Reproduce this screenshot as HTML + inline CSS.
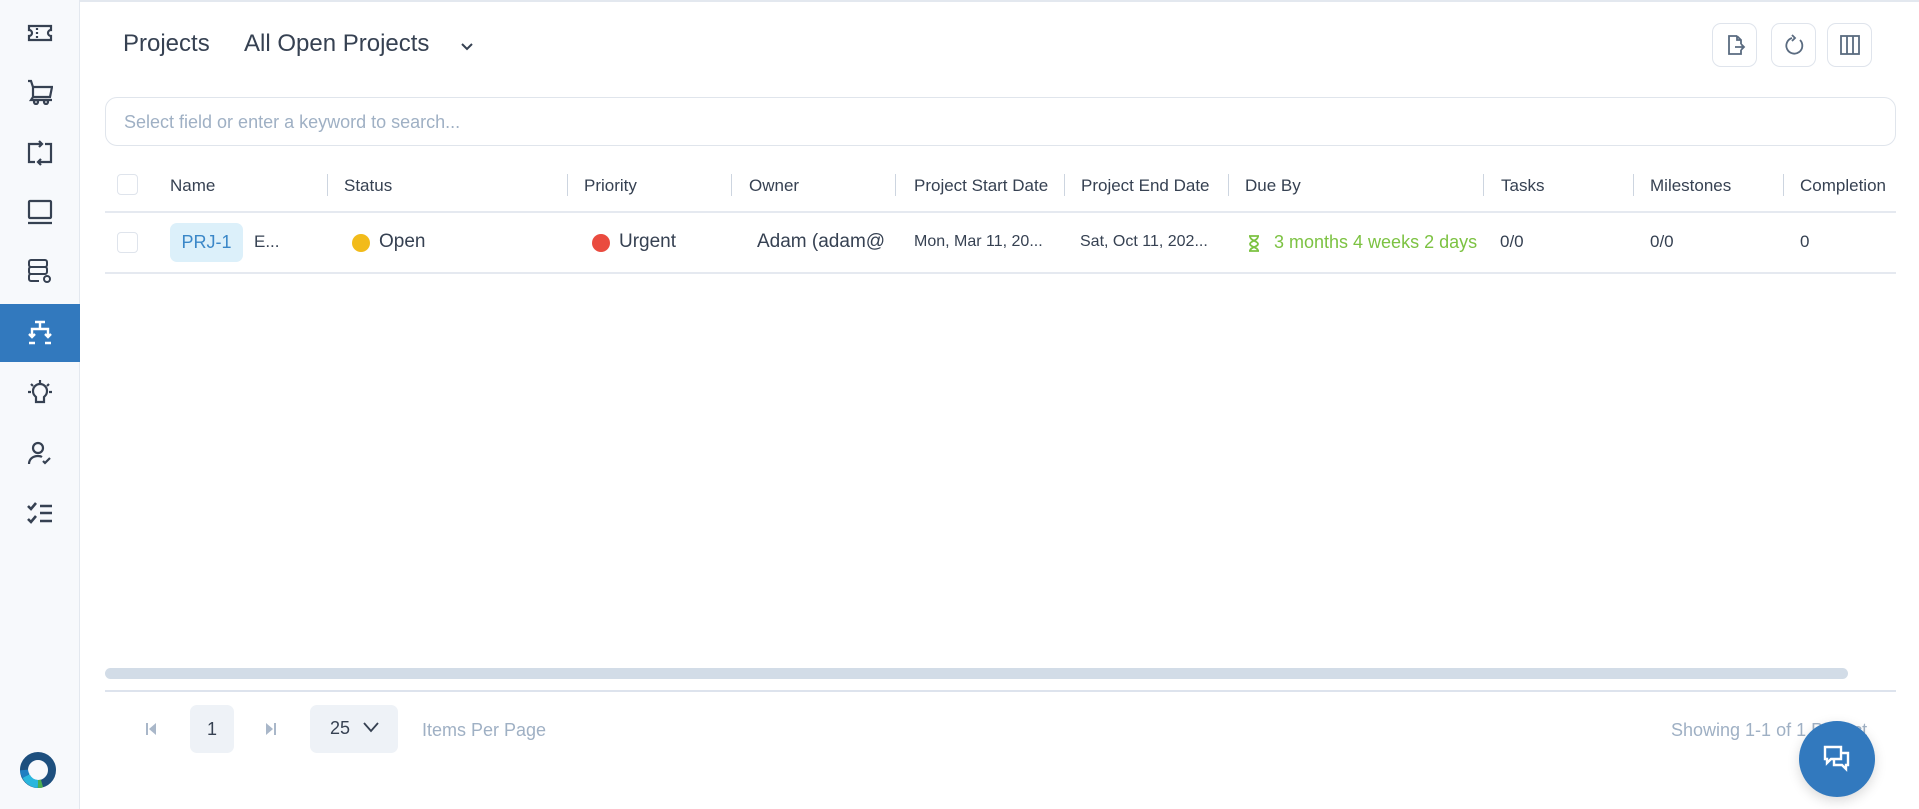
<!DOCTYPE html>
<html><head><meta charset="utf-8"><style>
*{box-sizing:border-box;margin:0;padding:0}
body{width:1919px;height:809px;overflow:hidden;background:#fff;font-family:"Liberation Sans",sans-serif;color:#364152;position:relative}
.side{position:absolute;left:0;top:0;width:80px;height:809px;background:#f7f9fc;border-right:1px solid #e3e8ef}
.topline{position:absolute;left:0;top:0;width:1919px;height:2px;background:#e3e8ef}
.ic{position:absolute;left:27px;width:26px;height:26px}
.act{position:absolute;left:0;top:304px;width:80px;height:58px;background:#3279be}
.abs{position:absolute;white-space:nowrap}
.tb{position:absolute;top:23px;width:45px;height:44px;border:1px solid #dfe4ec;border-radius:9px;display:flex;align-items:center;justify-content:center}
.hd{position:absolute;top:176px;font-size:17px;color:#364152}
.dv{position:absolute;top:174px;width:1px;height:22px;background:#cdd5e0}
.cd{position:absolute;top:232px;font-size:17px;color:#364152;white-space:nowrap;overflow:hidden}
.cb{position:absolute;left:117px;width:21px;height:21px;border:1px solid #dfe4ec;border-radius:4px;background:#fff}
</style></head><body>
<div class="topline"></div>
<div class="side"></div>
<div class="act"></div>
<svg class="ic" style="top:20px" viewBox="0 0 26 26" fill="none" stroke="#364152" stroke-width="2.2"><path d="M2 6h22v4a3 3 0 0 0 0 6v4H2v-4a3 3 0 0 0 0-6z"/><path d="M10 8v2M10 12v2M10 16v2"/></svg>
<svg class="ic" style="top:79px" viewBox="0 0 26 26" fill="none" stroke="#364152" stroke-width="2.2"><path d="M1 2h3l2 6v10h17l2-10H6M6 18l-2 3h21"/><circle cx="9" cy="23" r="2"/><circle cx="19" cy="23" r="2"/></svg>
<svg class="ic" style="top:140px" viewBox="0 0 26 26" fill="none" stroke="#364152" stroke-width="2.2"><path d="M9 4H2v18h6M17 22h7V4h-6M12 1l3 3-3 3M14 19l-3 3 3 3"/><path d="M15 4H9M11 22h6"/></svg>
<svg class="ic" style="top:199px" viewBox="0 0 26 26" fill="none" stroke="#364152" stroke-width="2.2"><rect x="2" y="2" width="22" height="17" rx="1"/><path d="M1 24h24"/></svg>
<svg class="ic" style="top:259px" viewBox="0 0 26 26" fill="none" stroke="#364152" stroke-width="2"><rect x="2" y="1" width="18" height="7" rx="2"/><rect x="2" y="8" width="18" height="7" rx="2"/><path d="M12 22H4a2 2 0 0 1-2-2v-3a2 2 0 0 1 2-2h10"/><circle cx="20" cy="20" r="3"/></svg>
<svg class="ic" style="top:320px" viewBox="0 0 26 26" fill="none" stroke="#fff" stroke-width="2.4"><path d="M8 2h10M13 2v7M5 17V9h16v8M2 14l3 3 3-3M18 14l3 3 3-3M2 23h6M18 23h6"/></svg>
<svg class="ic" style="top:379px" viewBox="0 0 26 26" fill="none" stroke="#364152" stroke-width="2.2"><path d="M13 1v3M4 5l2 2M22 5l-2 2M1 13h3M22 13h3"/><path d="M9 18c-2-2-3-3-3-6a7 7 0 0 1 14 0c0 3-1 4-3 6v5H9z"/></svg>
<svg class="ic" style="top:440px" viewBox="0 0 26 26" fill="none" stroke="#364152" stroke-width="2.2"><circle cx="11" cy="8" r="5"/><path d="M2 24c0-5 4-8 9-8 2 0 3 .3 4 1M16 21l2 2 5-5"/></svg>
<svg class="ic" style="top:500px" viewBox="0 0 26 26" fill="none" stroke="#364152" stroke-width="2.6"><path d="M1 6l3 3 5-6M1 19l3 3 5-6M13 6h12M13 13h12M13 21h12"/></svg>
<svg style="position:absolute;left:19px;top:751px" width="38" height="38" viewBox="0 0 38 38"><circle cx="19" cy="19" r="14" fill="none" stroke="#1d4f7e" stroke-width="8"/><path d="M7 25a14 14 0 0 0 12 8" fill="none" stroke="#2ab6dd" stroke-width="8"/><path d="M19 33a14 14 0 0 0 4-.5" fill="none" stroke="#4caf50" stroke-width="8"/><path d="M5 19a14 14 0 0 0 2 6" fill="none" stroke="#1f7fc2" stroke-width="8"/></svg>

<div class="abs" style="left:123px;top:30px;font-size:24px;color:#364152">Projects</div>
<div class="abs" style="left:244px;top:30px;font-size:24px;color:#364152">All Open Projects</div>
<svg style="position:absolute;left:459px;top:41px" width="16" height="12" viewBox="0 0 16 12" fill="none" stroke="#364152" stroke-width="2"><path d="M3 3l5 5 5-5"/></svg>

<div class="tb" style="left:1712px"><svg width="22" height="22" viewBox="0 0 22 22" fill="none" stroke="#5a6b80" stroke-width="1.8"><path d="M13 2H5v18h12v-4M13 2l4 4v4M13 2v4h4M11 13h9M17 10l3 3-3 3"/></svg></div>
<div class="tb" style="left:1771px"><svg width="22" height="22" viewBox="0 0 22 22" fill="none" stroke="#5a6b80" stroke-width="1.8"><path d="M17 6a8 8 0 1 1-8-2M9 1l3 3-3 3"/></svg></div>
<div class="tb" style="left:1827px"><svg width="22" height="22" viewBox="0 0 22 22" fill="none" stroke="#5a6b80" stroke-width="1.8"><rect x="2" y="2" width="18" height="18"/><path d="M8 2v18M14 2v18"/></svg></div>

<div style="position:absolute;left:105px;top:97px;width:1791px;height:49px;border:1px solid #e0e5ec;border-radius:12px"></div>
<div class="abs" style="left:124px;top:112px;font-size:18px;color:#9fb0c4">Select field or enter a keyword to search...</div>

<div class="cb" style="top:174px"></div>
<div class="hd" style="left:170px">Name</div>
<div class="dv" style="left:327px"></div><div class="hd" style="left:344px">Status</div>
<div class="dv" style="left:567px"></div><div class="hd" style="left:584px">Priority</div>
<div class="dv" style="left:731px"></div><div class="hd" style="left:749px">Owner</div>
<div class="dv" style="left:895px"></div><div class="hd" style="left:914px;width:150px;overflow:hidden;white-space:nowrap">Project Start Date</div>
<div class="dv" style="left:1064px"></div><div class="hd" style="left:1081px;width:147px;overflow:hidden;white-space:nowrap">Project End Date</div>
<div class="dv" style="left:1228px"></div><div class="hd" style="left:1245px">Due By</div>
<div class="dv" style="left:1483px"></div><div class="hd" style="left:1501px">Tasks</div>
<div class="dv" style="left:1633px"></div><div class="hd" style="left:1650px">Milestones</div>
<div class="dv" style="left:1783px"></div><div class="hd" style="left:1800px;width:96px;overflow:hidden;white-space:nowrap">Completion</div>
<div style="position:absolute;left:105px;top:211px;width:1791px;height:2px;background:#e5e9f0"></div>

<div class="cb" style="top:232px"></div>
<div style="position:absolute;left:170px;top:223px;width:73px;height:39px;background:#dcf0fa;border-radius:7px;color:#3a87c8;font-size:18px;text-align:center;line-height:39px">PRJ-1</div>
<div class="cd" style="left:254px">E...</div>
<div style="position:absolute;left:352px;top:234px;width:18px;height:18px;border-radius:50%;background:#f2bb1a"></div>
<div class="cd" style="left:379px;font-size:19px;top:231px">Open</div>
<div style="position:absolute;left:592px;top:234px;width:18px;height:18px;border-radius:50%;background:#ea4b3f"></div>
<div class="cd" style="left:619px;font-size:19px;top:231px">Urgent</div>
<div class="cd" style="left:757px;width:145px;font-size:19px;top:231px">Adam (adam@</div>
<div class="cd" style="left:914px;font-size:16px;top:233px">Mon, Mar 11, 20...</div>
<div class="cd" style="left:1080px;font-size:16px;top:233px">Sat, Oct 11, 202...</div>
<svg style="position:absolute;left:1248px;top:235px" width="12" height="17" viewBox="0 0 12 17" fill="none" stroke="#7cc242" stroke-width="1.8"><path d="M1 1h10M1 16h10M2 1c0 5 8 5 8 8s-8 3-8 7M10 1c0 5-8 5-8 8s8 3 8 7"/></svg>
<div class="cd" style="left:1274px;width:216px;color:#7cc242;font-size:18px">3 months 4 weeks 2 days</div>
<div class="cd" style="left:1500px">0/0</div>
<div class="cd" style="left:1650px">0/0</div>
<div class="cd" style="left:1800px">0</div>
<div style="position:absolute;left:105px;top:272px;width:1791px;height:2px;background:#e5e9f0"></div>

<div style="position:absolute;left:105px;top:668px;width:1743px;height:11px;background:#d2dce7;border-radius:6px"></div>
<div style="position:absolute;left:105px;top:690px;width:1791px;height:2px;background:#dde3ed"></div>

<svg style="position:absolute;left:144px;top:721px" width="14" height="16" viewBox="0 0 14 16" fill="#a9b7c9"><rect x="2" y="2" width="2" height="12"/><path d="M12 2v12L5 8z"/></svg>
<div style="position:absolute;left:190px;top:705px;width:44px;height:48px;background:#eef2f7;border-radius:7px;text-align:center;line-height:48px;font-size:18px;color:#364152">1</div>
<svg style="position:absolute;left:264px;top:721px" width="14" height="16" viewBox="0 0 14 16" fill="#a9b7c9"><path d="M2 2v12l7-6z"/><rect x="10" y="2" width="2" height="12"/></svg>
<div style="position:absolute;left:310px;top:705px;width:88px;height:48px;background:#eef2f7;border-radius:7px"></div>
<div class="abs" style="left:330px;top:718px;font-size:18px;color:#364152">25</div>
<svg style="position:absolute;left:362px;top:720px" width="18" height="14" viewBox="0 0 18 14" fill="none" stroke="#364152" stroke-width="1.8"><path d="M2 3l7 8 7-8"/></svg>
<div class="abs" style="left:422px;top:720px;font-size:18px;color:#9fb0c4">Items Per Page</div>
<div class="abs" style="left:1671px;top:720px;font-size:18px;color:#9fb0c4">Showing 1-1 of 1 Project</div>
<div style="position:absolute;left:1799px;top:721px;width:76px;height:76px;border-radius:50%;background:#3279be;box-shadow:0 4px 12px rgba(0,0,0,.15)"></div>
<svg style="position:absolute;left:1822px;top:744px" width="30" height="30" viewBox="0 0 30 30" fill="none" stroke="#fff" stroke-width="2.4"><path d="M3 3h16v12H9l-4 4v-4H3z"/><path d="M19 9h7v12h-2v4l-4-4h-8v-6"/></svg>
</body></html>
